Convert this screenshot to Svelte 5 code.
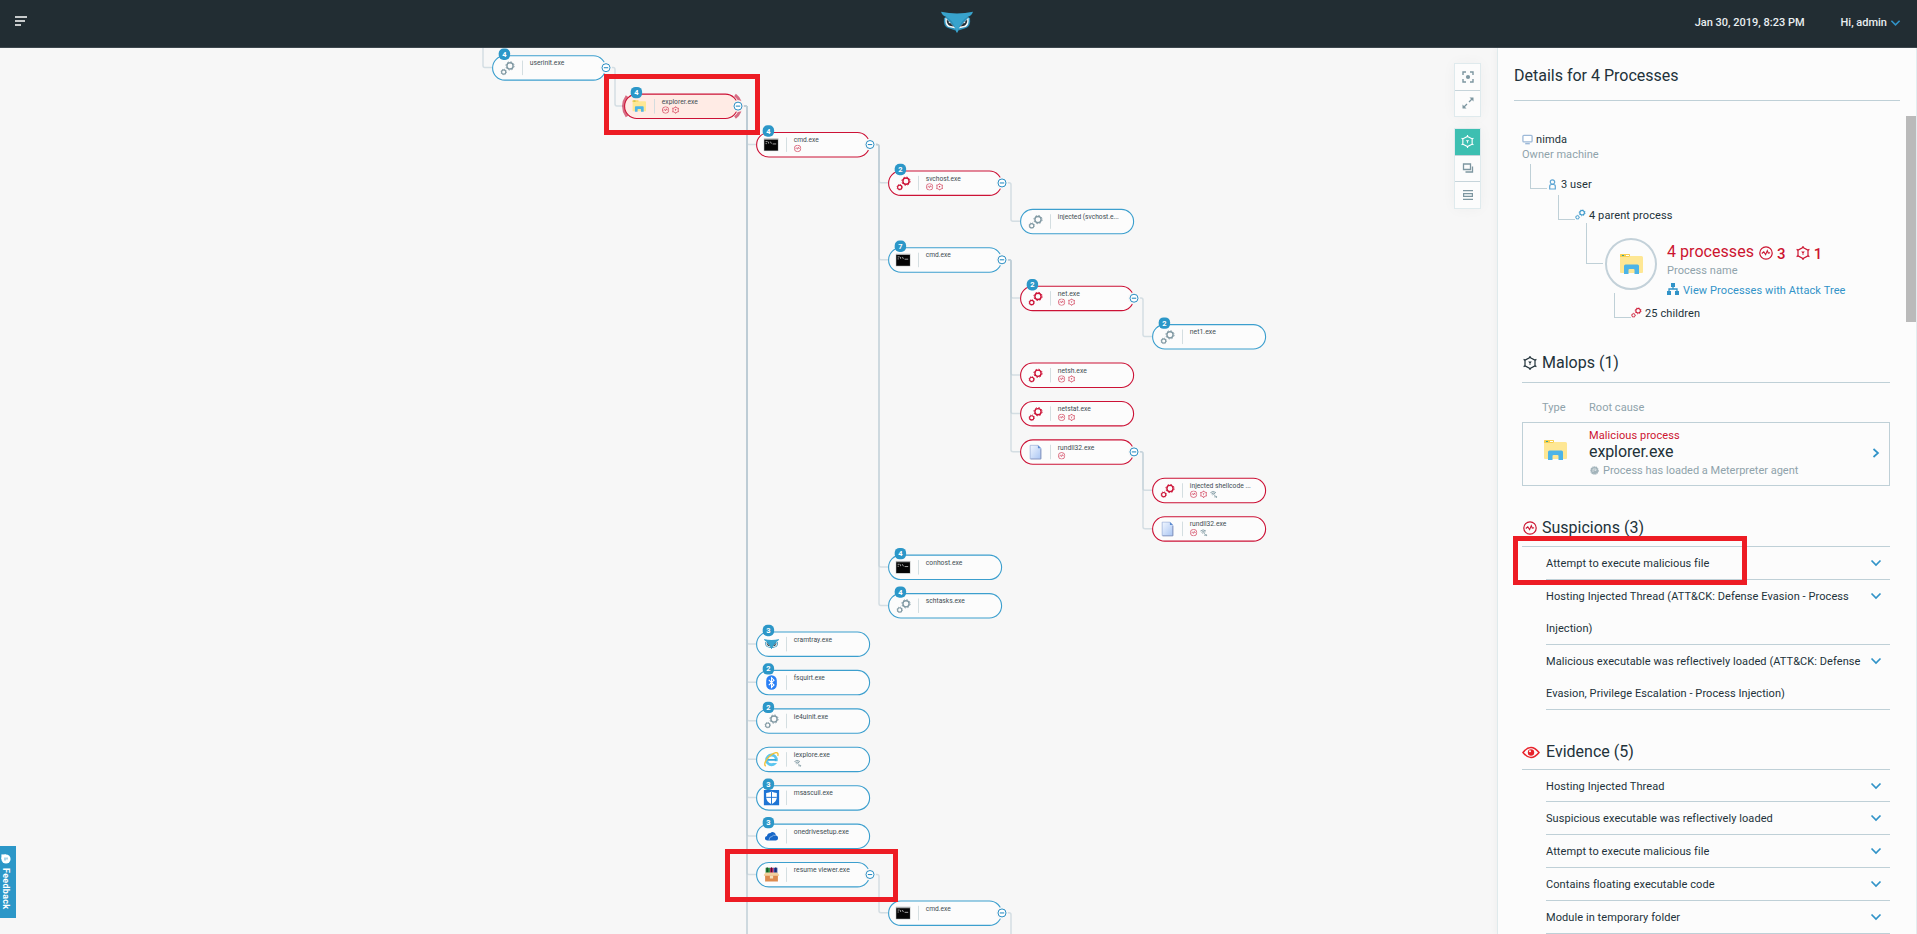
<script>
  const COL = 132;
  const ROW = 38.42;
  const X0 = 492;
  const Y0 = 7.1;

  const raw = [
    { id: 'userinit', parent: null, col: 0, name: 'userinit.exe', w: 34.5, icon: 'gears', n: 4, open: true },
    { id: 'explorer', parent: 'userinit', col: 1, name: 'explorer.exe', w: 36, icon: 'folder', n: 4, red: true, sel: true, open: true, tags: ['sus', 'mal'] },
    { id: 'cmd1', parent: 'explorer', col: 2, name: 'cmd.exe', w: 25, icon: 'term', n: 4, red: true, open: true, tags: ['sus'] },
    { id: 'svchost', parent: 'cmd1', col: 3, name: 'svchost.exe', w: 35, icon: 'gears', n: 2, red: true, open: true, tags: ['sus', 'mal'] },
    { id: 'inj1', parent: 'svchost', col: 4, name: 'injected (svchost.e...', w: 61, icon: 'gears' },
    { id: 'cmd7', parent: 'cmd1', col: 3, name: 'cmd.exe', w: 25, icon: 'term', n: 7, open: true },
    { id: 'net', parent: 'cmd7', col: 4, name: 'net.exe', w: 22, icon: 'gears', n: 2, red: true, open: true, tags: ['sus', 'mal'] },
    { id: 'net1', parent: 'net', col: 5, name: 'net1.exe', w: 26, icon: 'gears', n: 2 },
    { id: 'netsh', parent: 'cmd7', col: 4, name: 'netsh.exe', w: 29, icon: 'gears', red: true, tags: ['sus', 'mal'] },
    { id: 'netstat', parent: 'cmd7', col: 4, name: 'netstat.exe', w: 33, icon: 'gears', red: true, tags: ['sus', 'mal'] },
    { id: 'rundll', parent: 'cmd7', col: 4, name: 'rundll32.exe', w: 36.5, icon: 'file', red: true, open: true, tags: ['sus'] },
    { id: 'inj2', parent: 'rundll', col: 5, name: 'injected shellcode ...', w: 61, icon: 'gears', red: true, tags: ['sus', 'mal', 'net'] },
    { id: 'rundll2', parent: 'rundll', col: 5, name: 'rundll32.exe', w: 36.5, icon: 'file', red: true, tags: ['sus', 'net'] },
    { id: 'conhost', parent: 'cmd1', col: 3, name: 'conhost.exe', w: 36.5, icon: 'term', n: 4 },
    { id: 'schtasks', parent: 'cmd1', col: 3, name: 'schtasks.exe', w: 39, icon: 'gears', n: 4 },
    { id: 'cramtray', parent: 'explorer', col: 2, name: 'cramtray.exe', w: 38.3, icon: 'owl', n: 3 },
    { id: 'fsquirt', parent: 'explorer', col: 2, name: 'fsquirt.exe', w: 31, icon: 'bt', n: 2 },
    { id: 'ie4', parent: 'explorer', col: 2, name: 'ie4uinit.exe', w: 34.3, icon: 'gears', n: 2 },
    { id: 'iexplore', parent: 'explorer', col: 2, name: 'iexplore.exe', w: 36, icon: 'ie', tags: ['net'] },
    { id: 'msas', parent: 'explorer', col: 2, name: 'msascuil.exe', w: 39, icon: 'shield', n: 3 },
    { id: 'onedrive', parent: 'explorer', col: 2, name: 'onedrivesetup.exe', w: 55, icon: 'cloud', n: 3 },
    { id: 'resume', parent: 'explorer', col: 2, name: 'resume viewer.exe', w: 56, icon: 'box', open: true },
    { id: 'cmd9', parent: 'resume', col: 3, name: 'cmd.exe', w: 25, icon: 'term', open: true }
  ];

  const nodes = raw.map((n, i) => ({ ...n, x: X0 + n.col * COL, y: Y0 + i * ROW }));
  const byId = Object.fromEntries(nodes.map((n) => [n.id, n]));

  function branch(px, py, cx, cy) {
    const vx = px + 123;
    return `M${px + 118.5} ${py + 12.5}H${vx - 2}Q${vx} ${py + 12.5} ${vx} ${py + 14.5}V${cy + 10.5}Q${vx} ${cy + 12.5} ${vx + 2} ${cy + 12.5}H${cx}`;
  }

  const links = nodes
    .filter((n) => n.parent)
    .map((n) => branch(byId[n.parent].x, byId[n.parent].y, n.x, n.y));
  links.push(branch(360, -60, 492, Y0));
  links.push(branch(byId.explorer.x, byId.explorer.y, 756, 930));
  links.push(branch(byId.explorer.x, byId.explorer.y, 756, 970));
  links.push(branch(byId.cmd9.x, byId.cmd9.y, 1020, 930));

  const suspicions = [
    'Attempt to execute malicious file',
    'Hosting Injected Thread (ATT&CK: Defense Evasion - Process Injection)',
    'Malicious executable was reflectively loaded (ATT&CK: Defense Evasion, Privilege Escalation - Process Injection)'
  ];
  const evidence = [
    'Hosting Injected Thread',
    'Suspicious executable was reflectively loaded',
    'Attempt to execute malicious file',
    'Contains floating executable code',
    'Module in temporary folder'
  ];
</script>

<svg class="defs" aria-hidden="true">
  <symbol id="gears" viewBox="0 0 15 15">
    <g fill="none" stroke="currentColor">
      <circle cx="9.7" cy="5.2" r="3.1" stroke-width="1.4" />
      <circle cx="9.7" cy="5.2" r="4.1" stroke-width="1" stroke-dasharray="1.5 1.72" />
      <circle cx="3.4" cy="11.3" r="2.1" stroke-width="1.1" />
      <circle cx="3.4" cy="11.3" r="2.8" stroke-width=".7" stroke-dasharray="1.1 1.1" />
    </g>
  </symbol>
  <symbol id="folder" viewBox="0 0 24 22">
    <path d="M1 2q0-1 1-1h8q1 0 1 1v1h11.500q1.500 0 1.500 1.500V19q0 1-1 1H2q-1 0-1-1z" fill="#fee794" />
    <path d="M1 2q0-1 1-1h8q1 0 1 1v1l-1 1H1z" fill="#f8cf4f" />
    <path d="M3 2h2v1H3z" fill="#30a79b" /><path d="M7 2h3v1H7z" fill="#fff" />
    <path d="M5 21v-8q0-1.500 1.500-1.500h12Q20 11.500 20 13v8h-4.500v-4q0-1-1-1h-4q-1 0-1 1v4z" fill="#4cb4e7" />
  </symbol>
  <symbol id="term" viewBox="0 0 15 13">
    <path d="M0 0h15v13H0z" fill="#a9abac" /><path d="M.7 1.600h13.600v10.700H.7z" fill="#050505" />
    <path d="M2 3.500h2M2 5.500h1.200M5 3.600v1.800M6.800 3.500l1 2M9 5.800h3.600" stroke="#c9c9c9" stroke-width=".8" fill="none" />
  </symbol>
  <symbol id="file" viewBox="0 0 13 16">
    <defs><linearGradient id="fileFill" x2="1" y2="1"><stop stop-color="#f2f7ff" /><stop offset="1" stop-color="#a9c5f3" /></linearGradient></defs>
    <path d="M1 1h8l3 3v11H1z" fill="url(#fileFill)" stroke="#93a9d6" stroke-width=".7" />
    <path d="M9 1v3h3z" fill="#5b8bd0" /><path d="M1.500 15.300H12V5" fill="none" stroke="#7d8fbb" stroke-width=".8" />
  </symbol>
  <symbol id="owl" viewBox="0 0 32 22">
    <path d="M3 7q-1 8 4 10l9 3 9-3q5-2 4-10l-7-3H10z" fill="#2d8fb8" />
    <path d="M4.500 6.500q-1 7.500 3 9.500l7 1.500z M27.500 6.500q1 7.500-3 9.500l-7 1.500z" fill="#f3f7f8" />
    <path d="M5.800 8.500q-.3 4.500 2.900 6.300l4 .8z M26.200 8.500q.3 4.500-2.900 6.300l-4 .8z" fill="#222b33" />
    <circle cx="8.500" cy="11.500" r=".8" fill="#ddd" /><circle cx="23.500" cy="11.500" r=".8" fill="#ddd" />
    <path d="M0 .8q16 3.500 32 0-1.500 4.300-5.500 5.200-5 2.500-8 9L16.600 21.500h-1.200L13.500 15q-3-6.500-8-9Q1.500 5.100 0 .8z" fill="#38a3cd" />
  </symbol>
  <symbol id="bt" viewBox="0 0 12 16">
    <rect x=".5" y=".5" width="11" height="15" rx="5.500" fill="#2a7ff5" />
    <path d="M3.200 5.300l5.400 5.200L6 13V3l2.600 2.500-5.400 5.200" fill="none" stroke="#fff" stroke-width="1.100" />
  </symbol>
  <symbol id="ie" viewBox="0 0 16 16">
    <circle cx="8" cy="8.500" r="5" fill="none" stroke="#5cc6ef" stroke-width="3" />
    <path d="M4 8.500h9" stroke="#38a9dd" stroke-width="2" /><path d="M10 10h5v1.800h-5z" fill="#fcfcfc" />
    <path d="M2 15Q-.5 13 3.500 7.500 8 1.800 12.500 1q3-.3 2 3.500" fill="none" stroke="#f1c136" stroke-width="1.400" />
  </symbol>
  <symbol id="shield" viewBox="0 0 16 16">
    <path d="M0 0h16v16H0z" fill="#1e74d4" />
    <path d="M8 1.500q2.500 1.500 5.500 1.500v4.500Q13.500 12 8 14.600 2.500 12 2.500 7.500V3Q5.500 3 8 1.500z" fill="#fff" />
    <path d="M8 1.500v13M2.500 7.500h11" stroke="#1e74d4" stroke-width="1" />
  </symbol>
  <symbol id="cloud" viewBox="0 0 14 10">
    <path d="M3 9Q.4 9 .4 6.800.400 5 2.400 4.600 3 1.500 6 1.500 7.300-.3 9.700.9q1.700 1 1.600 2.900 2.300.5 2.300 2.700T11.500 9z" fill="#1767c8" />
    <path d="M4.500 8.500Q4.700 5 7.500 5q1-2 3.600-1" fill="none" stroke="#e8f1fb" stroke-width=".5" />
  </symbol>
  <symbol id="box" viewBox="0 0 15 14">
    <path d="M2 .5h4V6H2z" fill="#1f8b3a" /><path d="M6 .5h3.500V6H6z" fill="#b51f57" /><path d="M9.500.5H13V6H9.500z" fill="#2746a8" />
    <path d="M3.500 0v5M7.500 0v5M11.500 0v5" stroke="#111" stroke-width=".6" />
    <path d="M0 7.500L2 5h11l2 2.500-1.500 1H1.500z" fill="#f3cf9e" /><path d="M1.500 8h12v5.500h-12z" fill="#dd8a4e" />
    <path d="M6 8h3v2.500H6z" fill="#f4dfbd" />
  </symbol>
  <symbol id="sus" viewBox="0 0 14 14">
    <circle cx="7" cy="7" r="6.200" fill="none" stroke="currentColor" stroke-width="1.200" />
    <path d="M2.800 7.500l2-1.700 1.800 2.800 1.700-4 1 2.500 1.800-.3" fill="none" stroke="currentColor" stroke-width="1.100" />
  </symbol>
  <symbol id="mal" viewBox="0 0 14 14">
    <path d="M7 1.500l5 2.600v5.800L7 12.500 2 9.900V4.100z" fill="none" stroke="currentColor" stroke-width="1.200" />
    <path d="M7 0v2M7 12v2M.6 3.400l1.500.8M13.400 3.400l-1.500.8M.6 10.600l1.500-.8M13.400 10.600l-1.500-.8" stroke="currentColor" stroke-width="1.200" />
    <path d="M5.200 5.600h3.600L7.400 7.200v1.700h-.8V7.200z" fill="currentColor" />
  </symbol>
  <symbol id="net" viewBox="0 0 14 14">
    <path d="M1 4q5-4.500 10.500 0M3 6.300q3.500-3 7 0" fill="none" stroke="currentColor" stroke-width="1.700" />
    <path d="M4.500 8.500l2.500-1.500 4 4.500M8 12h5.500M11.500 10l2 2-2 2" fill="none" stroke="currentColor" stroke-width="1.400" />
  </symbol>
  <symbol id="chev" viewBox="0 0 12 8"><path d="M1.500 1.500L6 6l4.500-4.500" fill="none" stroke="currentColor" stroke-width="1.700" /></symbol>
</svg>

<div class="app">
  <header>
    <svg class="menu" viewBox="0 0 13 10"><path d="M0 1h12M0 5h10M0 9h6" stroke="#fff" stroke-width="1.600" /></svg>
    <svg class="logo"><use href="#owl" /></svg>
    <div class="right"><span>Jan 30, 2019, 8:23 PM</span><span class="user">Hi, admin <svg class="uchev"><use href="#chev" /></svg></span></div>
  </header>

  <main>
    <section class="canvas">
      <svg class="tree" viewBox="0 0 1497 886">
        {#each links as d}
          <path {d} class="link" />
        {/each}
        {#each nodes as n}
          <g transform="translate({n.x} {n.y})" class:red={n.red}>
            {#if n.sel}
              <path d="M3 2.500Q-4 12.500 3 23M111 1.500Q114.500 4 116 8M111 24Q114.500 21.500 116 17.500" class="halo" />
            {/if}
            <rect x=".6" y=".6" width="113" height="24.400" rx="12.200" class="pill" class:sel={n.sel} />
            {#if n.icon === 'gears'}
              <use href="#gears" x="8.300" y="5.600" width="15" height="15" class="gear" />
            {:else if n.icon === 'folder'}
              <use href="#folder" x="8" y="6" width="14" height="13" />
            {:else if n.icon === 'term'}
              <use href="#term" x="7.600" y="6.200" width="15" height="13" />
            {:else if n.icon === 'cloud'}
              <use href="#cloud" x="8.500" y="8" width="14" height="10" />
            {:else if n.icon === 'owl'}
              <use href="#owl" x="7.800" y="7.300" width="15.500" height="10.600" />
            {:else}
              <use href="#{n.icon}" x="7.500" y="5" width="16" height="15.500" />
            {/if}
            <path d="M30.500 5.500V20" class="rule" />
            <text x="37.800" y="10.300" textLength={n.w} lengthAdjust="spacingAndGlyphs">{n.name}</text>
            {#each n.tags ?? [] as t, i}
              <use href="#{t}" x={37.9 + i * 10} y="12.800" width="7.400" height="7.400" class="tag" class:nettag={t === 'net'} />
            {/each}
            {#if n.n}
              <rect x="6.700" y="-6.600" width="11.400" height="11.400" rx="4.800" fill="#2c97c8" />
              <text x="12.400" y="1.600" class="count">{n.n}</text>
            {/if}
            {#if n.open}
              <circle cx="114" cy="12.600" r="6" class="gap" class:gapsel={n.sel} />
              <circle cx="114" cy="12.600" r="4" class="knob" />
              <path d="M111.800 12.600h4.400" class="minus" />
            {/if}
          </g>
        {/each}
      </svg>

      <div class="tools">
        <div class="group">
          <button aria-label="Fit"><svg viewBox="0 0 12 12"><path d="M1 4V1h3M8 1h3v3M11 8v3H8M4 11H1V8" fill="none" stroke="#7d96a0" stroke-width="1.400" /><circle cx="6" cy="6" r="2.100" fill="#7d96a0" /></svg></button>
          <button aria-label="Expand"><svg viewBox="0 0 12 12"><path d="M7 5l3.500-3.500M5 7L1.500 10.500" stroke="#7d96a0" stroke-width="1.300" /><path d="M7.500.5h4v4zM.5 7.500v4h4z" fill="#7d96a0" /></svg></button>
        </div>
        <div class="group">
          <button class="active" aria-label="Malops"><svg class="big"><use href="#mal" /></svg></button>
          <button aria-label="Windows"><svg viewBox="0 0 12 12"><path d="M1.500 2h7v5.500h-7zM10.500 4.500V10H3.500" fill="none" stroke="#7d96a0" stroke-width="1.300" /></svg></button>
          <button class="last" aria-label="Rows"><svg viewBox="0 0 12 12"><path d="M1 1.600h10M1 10.400h10M1.600 4.600h8.800v2.800H1.600z" fill="none" stroke="#7d96a0" stroke-width="1.200" /></svg></button>
        </div>
      </div>

      <div class="feedback">
        <svg viewBox="0 0 10 10"><circle cx="5" cy="5" r="4.600" fill="#fff" /><path d="M.4.400V5H5V.4z" fill="#fff" /><path d="M4 3.500v3M6 3.500v2" stroke="#2c97c8" stroke-width=".8" /></svg>
        <span>Feedback</span>
      </div>
    </section>

    <aside>
      <h1>Details for 4 Processes</h1>
      <div class="body">
        <div class="chain">
          <div class="machine"><svg viewBox="0 0 12 11"><rect x="1" y="1" width="10" height="7" rx="1" fill="#fff" stroke="#9db9d8" stroke-width="1.400" /><path d="M3.500 10h5" stroke="#9db9d8" stroke-width="1.600" /></svg>nimda</div>
          <div class="owner">Owner machine</div>
          <div class="step s1"><i></i><div class="lbl"><svg class="person" viewBox="0 0 9 11"><circle cx="4.500" cy="3" r="2.200" fill="none" stroke="#5ea5d3" stroke-width="1.200" /><path d="M1.700 10V7.500q0-2 2-2h1.600q2 0 2 2V10z" fill="none" stroke="#5ea5d3" stroke-width="1.200" /></svg>3 user</div></div>
          <div class="step s2"><i></i><div class="lbl"><svg class="blue"><use href="#gears" /></svg>4 parent process</div></div>
          <div class="step s3">
            <i></i>
            <div class="disc"><svg><use href="#folder" /></svg></div>
            <div class="info">
              <div class="count-line"><span class="procs">4 processes</span><svg><use href="#sus" /></svg><b>3</b><svg class="m"><use href="#mal" /></svg><b>1</b></div>
              <div class="muted">Process name</div>
              <div class="view"><svg viewBox="0 0 12 12"><path d="M4 0h4v4H4zM0 8h4v4H0zM8 8h4v4H8z" fill="#3193c8" /><path d="M6 4v2M2 8V6h8v2" fill="none" stroke="#3193c8" stroke-width="1.300" /></svg>View Processes with Attack Tree</div>
            </div>
          </div>
          <div class="step s4"><i></i><div class="lbl"><svg class="crimson"><use href="#gears" /></svg>25 children</div></div>
        </div>

        <h2 class="malops"><svg><use href="#mal" /></svg>Malops (1)</h2>
        <div class="thead"><span>Type</span><span>Root cause</span></div>
        <div class="card">
          <svg class="fold"><use href="#folder" /></svg>
          <div class="ct">
            <div class="kind">Malicious process</div>
            <div class="exe">explorer.exe</div>
            <div class="why"><svg viewBox="0 0 9 9"><circle cx="4.500" cy="4.500" r="3.600" fill="#a3b4bb" stroke="#a3b4bb" stroke-width="1.400" stroke-dasharray="1.200 .6" /><path d="M3 6V3h3v1.500H4.500" fill="none" stroke="#e9eef0" stroke-width=".7" /></svg>Process has loaded a Meterpreter agent</div>
          </div>
          <svg class="next" viewBox="0 0 8 12"><path d="M1.500 2L6 6l-4.500 4" fill="none" stroke="#3193c8" stroke-width="1.700" /></svg>
        </div>

        <h2 class="susp"><svg class="crimson"><use href="#sus" /></svg>Suspicions (3)</h2>
        <ul>
          {#each suspicions as s}
            <li><span>{s}</span><svg><use href="#chev" /></svg></li>
          {/each}
        </ul>

        <h2 class="evid"><svg class="eye" viewBox="0 0 18 12"><path d="M1 6q8-10 16 0-8 10-16 0z" fill="none" stroke="#e8222a" stroke-width="1.500" /><circle cx="9" cy="6" r="3.200" fill="#e8222a" /><circle cx="8" cy="4.800" r="1" fill="#fcfcfc" /></svg>Evidence (5)</h2>
        <ul class="ev">
          {#each evidence as s}
            <li><span>{s}</span><svg><use href="#chev" /></svg></li>
          {/each}
        </ul>
      </div>
      <div class="scroll"></div>
    </aside>
  </main>

  <div class="mark a"></div>
  <div class="mark b"></div>
  <div class="mark c"></div>
</div>

<style>
  :global(body) { overflow: hidden; background: #f7f7f7; }
  .defs { position: absolute; width: 0; height: 0; }
  .app { position: relative; width: 1917px; height: 934px; overflow: hidden; display: flex; flex-direction: column; font-family: Roboto, sans-serif; font-size: 11px; color: #22323a; }
  header { height: 47px; flex: none; background: #222d33; border-bottom: 1px solid #3d474e; display: grid; grid-template-columns: 941px 32px 1fr; align-items: center; box-sizing: content-box; }
  .menu { width: 13px; height: 10px; margin: -5px 0 0 15px; }
  .logo { width: 32px; height: 22px; margin-top: -3px; }
  .right { display: flex; justify-content: flex-end; gap: 36px; color: #e9eef0; font-size: 11px; font-weight: 500; padding-right: 16px; margin-top: -2px; }
  .user { display: flex; align-items: center; }
  .uchev { width: 11px; height: 8px; margin-left: 3px; color: #3193c8; }
  main { flex: 1; display: flex; min-height: 0; }
  .canvas { position: relative; flex: 1; background: #f7f7f7; min-width: 0; overflow: hidden; }
  .tree { display: block; width: 1497px; height: 886px; }
  .link { fill: none; stroke: #bccdd5; stroke-width: 1.5; opacity: .6; }
  .pill { fill: #fcfcfc; stroke: #3c9fce; stroke-width: 1.1; }
  .red .pill { stroke: #cc1236; }
  .red .pill.sel { fill: #ffebe5; }
  .halo { fill: none; stroke: #cf4a66; stroke-width: 3; opacity: .8; }
  .gear { color: #8199a3; }
  .red .gear { color: #cc1236; }
  .rule { stroke: #cfdade; stroke-width: .9; }
  .tree text { font-size: 7.2px; fill: #3e4c53; }
  .tree text.count { font-size: 7.5px; font-weight: 700; fill: #fff; text-anchor: middle; }
  .tag { color: #cc2a48; }
  .nettag { color: #7d96a0; }
  .gap { fill: #f7f7f7; }
  .gapsel { fill: #fbefec; }
  .knob { fill: #fff; stroke: #2c8fc4; stroke-width: 1; }
  .minus { stroke: #2c8fc4; stroke-width: 1.1; }
  .tools { position: absolute; left: 1454px; top: 15px; display: flex; flex-direction: column; gap: 11px; }
  .group { border: 1px solid #dfeaed; background: #fcfcfc; width: 25px; box-shadow: 0 0 14px rgba(0, 0, 0, .04); }
  button { display: flex; align-items: center; justify-content: center; width: 25px; height: 26px; padding: 0 0 1px; border: 0; background: none; }
  button + button { border-top: 1px solid #c6d4da; }
  button.last { height: 27px; }
  button svg { width: 12px; height: 12px; }
  button svg.big { width: 13px; height: 13px; }
  .active { background: #3dbfb1; color: #fff; }
  .feedback { position: absolute; left: 0; top: 798px; width: 16px; height: 72px; background: #2c97c8; color: #fff; display: flex; flex-direction: column; align-items: center; }
  .feedback svg { width: 10px; height: 10px; margin: 8px 4px 4px 0; }
  .feedback span { writing-mode: vertical-rl; font-weight: 700; font-size: 9px; line-height: 12px; margin-right: 4px; letter-spacing: .3px; }

  aside { position: relative; width: 420px; flex: none; box-sizing: border-box; background: #fcfcfc; border-left: 1px solid #dfeaec; border-right: 1px solid #e2edef; box-shadow: -2px 0 6px rgba(0, 0, 0, .03); overflow: hidden; letter-spacing: .1px; }
  h1 { margin: 0 16px; height: 49px; padding-top: 3px; line-height: 50px; border-bottom: 1px solid #bfd0d7; font-size: 16px; font-weight: 400; letter-spacing: 0; }
  .body { padding: 0 26px 0 24px; }
  .chain { padding-top: 31px; height: 246px; box-sizing: border-box; }
  .machine { display: flex; align-items: center; height: 15px; gap: 3px; }
  .machine svg { width: 11px; height: 11px; }
  .owner, .muted { color: #8fa3ab; line-height: 15px; letter-spacing: .04px; }
  .owner { margin-bottom: 2px; }
  .muted { padding-top: 1px; line-height: 14px; }
  .step { display: flex; align-items: flex-start; }
  .step i { width: 16px; height: 24px; flex: none; border-left: 1px solid #bfd0d7; border-bottom: 1px solid #bfd0d7; }
  .lbl { display: flex; align-items: center; height: 15px; margin-top: 13px; }
  .lbl svg { width: 11px; height: 11px; margin: -3px 3px 0 0; }
  .lbl svg.person { margin-top: -1px; }
  .blue { color: #3193c8; }
  .crimson { color: #cc1430; }
  .s1 { height: 31px; margin-left: 8px; }
  .s2 { height: 28px; margin-left: 36px; }
  .s3 { height: 70px; margin-left: 64px; }
  .s3 i { height: 40px; }
  .s4 { margin-left: 92px; }
  .disc { width: 48px; height: 48px; margin: 15px 10px 0 2px; border: 2px solid #c3d1d9; border-radius: 50%; display: flex; align-items: center; justify-content: center; flex: none; }
  .disc svg { width: 24px; height: 22px; }
  .info { padding-top: 18px; }
  .count-line { display: flex; align-items: center; height: 22px; color: #cc1430; }
  .procs { font-size: 16px; letter-spacing: .05px; margin-top: -1px; }
  .count-line svg { width: 14px; height: 14px; margin: 2px 4px 0 5px; }
  .count-line b { font-size: 15px; font-weight: 500; margin-top: 3px; }
  .count-line .m { margin-left: 10px; }
  .view { display: flex; align-items: center; color: #3193c8; margin-top: 5px; height: 15px; gap: 4px; }
  .view svg { width: 12px; height: 12px; margin-top: -3px; }

  h2 { margin: 0; font-size: 16px; font-weight: 400; display: flex; align-items: center; border-bottom: 1px solid #bfd0d7; letter-spacing: 0; line-height: 22px; }
  h2 svg { width: 14px; height: 14px; margin: -1px 5px 0 1px; }
  .malops { padding: 5px 0 8px; height: 22px; }
  .thead { display: flex; color: #8fa3ab; line-height: 15px; padding: 17px 0 7px 20px; letter-spacing: .04px; }
  .thead span:first-child { width: 47px; }
  .card { display: flex; height: 62px; border: 1px solid #bfd0d7; padding-left: 20px; }
  .fold { width: 24px; height: 22px; margin-top: 16px; }
  .ct { margin-left: 22px; flex: 1; }
  .kind { color: #cc1430; margin-top: 5px; line-height: 15px; }
  .exe { font-size: 16px; line-height: 18px; padding-bottom: 2px; letter-spacing: -.1px; }
  .why { color: #8fa3ab; line-height: 15px; display: flex; align-items: center; gap: 4px; letter-spacing: 0; }
  .why svg { width: 9px; height: 9px; margin-left: 1px; }
  .next { width: 8px; height: 12px; margin: 24px 9px 0 0; }
  .susp { height: 22px; padding: 31px 0 7px; }
  .susp svg { margin-top: 0; }
  .evid { height: 22px; padding: 31px 0 6px; }
  .evid .eye { width: 18px; height: 13px; margin: 1px 6px 0 0; }
  ul { list-style: none; margin: 0 0 0 24px; padding: 0; }
  li { display: flex; justify-content: space-between; line-height: 32px; border-bottom: 1px solid #bfd0d7; }
  .ev li:first-child { height: 31px; }
  li span { width: 320px; letter-spacing: .075px; padding-top: 1px; margin-bottom: -1px; }
  li svg { width: 12px; height: 8px; margin: 12px 8px 0 0; color: #3193c8; }
  .scroll { position: absolute; right: 0; top: 68px; width: 10px; height: 206px; background: #bababa; }

  .mark { position: absolute; border: 5px solid #ed1c24; box-sizing: border-box; }
  .a { left: 604px; top: 74px; width: 156px; height: 61px; }
  .b { left: 725px; top: 849px; width: 173px; height: 53px; }
  .c { left: 1513px; top: 536px; width: 234px; height: 49px; }
</style>
